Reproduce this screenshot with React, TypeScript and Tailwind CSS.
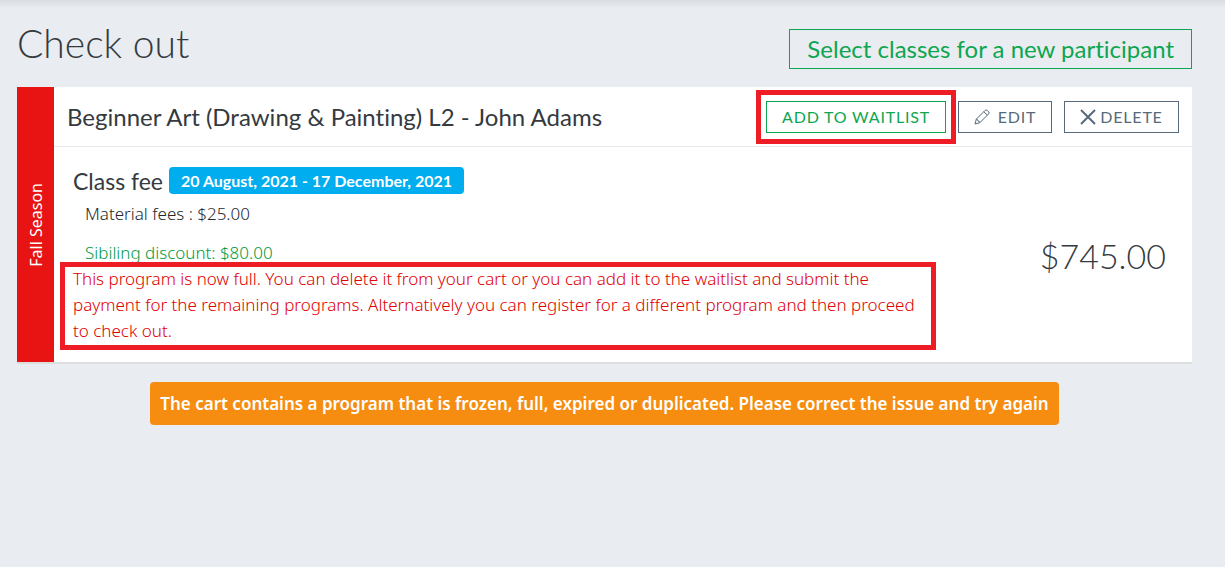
import type { ReactNode } from 'react';

interface CartItem {
  season: string;
  title: string;
  dates: string;
  materialFees: string;
  discount: string;
  total: string;
  notice: string;
}

const item: CartItem = {
  season: 'Fall Season',
  title: 'Beginner Art (Drawing & Painting) L2 - John Adams',
  dates: '20 August, 2021 - 17 December, 2021',
  materialFees: '$25.00',
  discount: '$80.00',
  total: '$745.00',
  notice:
    'This program is now full. You can delete it from your cart or you can add it to the waitlist and submit the payment for the remaining programs. Alternatively you can register for a different program and then proceed to check out.',
};

function PencilIcon() {
  return (
    <svg className="w-4 h-4" viewBox="0 0 16 16" fill="none" stroke="currentColor" strokeWidth="1" strokeLinejoin="round" aria-hidden="true">
      <path d="M1 15 L2.3 10.2 L11.2 1.3 Q12 0.5 13 1.2 L14.8 3 Q15.5 4 14.7 4.8 L5.8 13.7 Z" />
      <path d="M2.3 10.2 Q3.8 10 4 12 Q6 12.2 5.8 13.7 M9.8 2.7 L13.3 6.2" />
    </svg>
  );
}

function CrossIcon() {
  return (
    <svg className="w-4 h-4" viewBox="0 0 16 16" fill="none" stroke="currentColor" strokeWidth="2" aria-hidden="true">
      <path d="M1 1 L15 15 M15 1 L1 15" />
    </svg>
  );
}

interface ActionButtonProps {
  className: string;
  children: ReactNode;
}

function ActionButton({ className, children }: ActionButtonProps) {
  return (
    <button type="button" className={`flex h-8 items-center justify-center border text-base uppercase tracking-wider whitespace-nowrap ${className}`}>
      {children}
    </button>
  );
}

function CartCard({ season, title, dates, materialFees, discount, total, notice }: CartItem) {
  return (
    <article className="flex border-b-2 border-[#dcdddf] bg-white">
      <div className="flex w-[37px] shrink-0 items-center justify-center bg-[#e81313]">
        <span className="rotate-180 font-['Noto_Sans',sans-serif] text-base text-white [writing-mode:vertical-rl]">{season}</span>
      </div>

      <div className="min-w-0 flex-1">
        <header className="flex h-15 items-center justify-between border-b border-[#e9ecef] px-[13px]">
          <h2 className="text-[24px] text-[#343a40]">{title}</h2>
          <div className="flex gap-3">
            <div className="relative">
              <ActionButton className="w-[180px] border-[#0da650] text-[#0da650]">Add to waitlist</ActionButton>
              <div className="pointer-events-none absolute -inset-x-[10px] -inset-y-[11px] border-5 border-[#ee1c25]" />
            </div>
            <ActionButton className="w-[94px] gap-2 border-[#566a7c] text-[#566a7c]">
              <PencilIcon />
              Edit
            </ActionButton>
            <ActionButton className="w-[115px] gap-1 border-[#566a7c] text-[#566a7c]">
              <CrossIcon />
              Delete
            </ActionButton>
          </div>
        </header>

        <div className="flex items-center justify-between pt-5 pr-[26px] pb-[18px] pl-[19px]">
          <div className="max-w-[850px] font-['Noto_Sans',sans-serif] text-[17px] leading-[26px] font-light text-[#24292e]">
            <h3 className="flex items-center gap-[6px] font-['Lato',sans-serif] text-[23px] font-normal text-[#343a40]">
              Class fee
              <span className="rounded-sm bg-[#00adef] px-3 text-base leading-[27px] font-bold text-white">{dates}</span>
            </h3>
            <p className="mt-[7px] pl-3">Material fees : {materialFees}</p>
            <p className="mt-[13px] pl-3 text-[#009a40]">Sibiling discount: {discount}</p>
            <div className="relative">
              <p className="text-[#e00000]">{notice}</p>
              <div className="pointer-events-none absolute -inset-x-[13px] -top-1 -bottom-[6px] border-5 border-[#ee1c25]" />
            </div>
          </div>
          <p className="text-[34px] font-light text-[#343a40]">{total}</p>
        </div>
      </div>
    </article>
  );
}

export default function App() {
  return (
    <main className="min-h-screen bg-[#e9ecf1] font-['Lato',sans-serif] [font-variant-ligatures:none]">
      <div className="h-2 bg-linear-to-b from-[#d9dce1] to-[#e9ecf1]" />
      <div className="pr-[33px] pl-[17px]">
        <div className="flex items-end justify-between pt-[10px] pb-[18px]">
          <h1 className="text-[39px] leading-[51px] font-light text-[#343a40]">Check out</h1>
          <button type="button" className="h-10 border border-[#0da650] px-[17px] text-[24px] leading-9 text-[#0da650]">
            Select classes for a new participant
          </button>
        </div>

        <CartCard {...item} />

        <div className="mt-[18px] flex justify-center">
          <p role="alert" className="rounded-sm bg-[#f68d11] px-[10px] py-[9px] font-['Noto_Sans',sans-serif] text-[17px] leading-[25px] font-semibold text-white">
            The cart contains a program that is frozen, full, expired or duplicated. Please correct the issue and try again
          </p>
        </div>
      </div>
    </main>
  );
}
